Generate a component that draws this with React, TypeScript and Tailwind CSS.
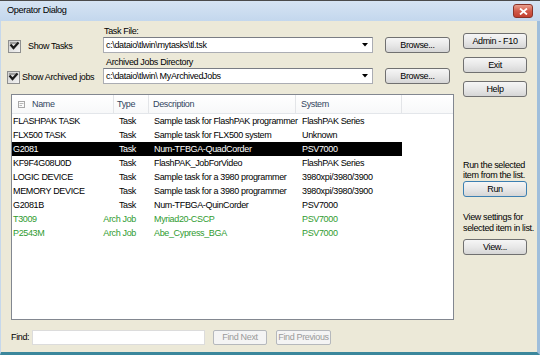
import React from 'react';

type Row = {
  name: string;
  type: string;
  desc: string;
  sys: string;
  selected?: boolean;
  arch?: boolean;
};

const rows: Row[] = [
  { name: 'FLASHPAK TASK', type: 'Task', desc: 'Sample task for FlashPAK programmer', sys: 'FlashPAK Series' },
  { name: 'FLX500 TASK', type: 'Task', desc: 'Sample task for FLX500 system', sys: 'Unknown' },
  { name: 'G2081', type: 'Task', desc: 'Num-TFBGA-QuadCorder', sys: 'PSV7000', selected: true },
  { name: 'KF9F4G08U0D', type: 'Task', desc: 'FlashPAK_JobForVideo', sys: 'FlashPAK Series' },
  { name: 'LOGIC DEVICE', type: 'Task', desc: 'Sample task for a 3980 programmer', sys: '3980xpi/3980/3900' },
  { name: 'MEMORY DEVICE', type: 'Task', desc: 'Sample task for a 3980 programmer', sys: '3980xpi/3980/3900' },
  { name: 'G2081B', type: 'Task', desc: 'Num-TFBGA-QuinCorder', sys: 'PSV7000' },
  { name: 'T3009', type: 'Arch Job', desc: 'Myriad20-CSCP', sys: 'PSV7000', arch: true },
  { name: 'P2543M', type: 'Arch Job', desc: 'Abe_Cypress_BGA', sys: 'PSV7000', arch: true },
];

function Button({ label, w = 'w-[64px]', def, disabled }: { label: string; w?: string; def?: boolean; disabled?: boolean }) {
  if (disabled) {
    return (
      <div className={`${w} h-[15px] flex items-center justify-center whitespace-nowrap rounded-[2px] border border-[#b5b8bc] bg-[#f4f4f4] text-[#9a9a9a]`}>
        {label}
      </div>
    );
  }
  return (
    <div
      className={`${w} h-[16px] flex items-center justify-center whitespace-nowrap rounded-[3px] border ${
        def ? 'border-[#3c7fb1]' : 'border-[#707070]'
      } bg-linear-to-b from-[#f6f6f6] via-[#e8e8e8] to-[#d6d6d6] text-black`}
    >
      {label}
    </div>
  );
}

function Check() {
  return (
    <div className="w-[13px] h-[13px] shrink-0 border border-[#8e8f8f] bg-linear-to-br from-[#cfcfcf] to-[#f4f4f4] flex items-center justify-center">
      <svg width="11" height="11" viewBox="0 0 11 11">
        <path d="M1.5 3.5 L4.5 7 L9.5 1.5" fill="none" stroke="#1a1a1a" strokeWidth="2.2" />
        <rect x="1" y="1" width="9" height="2" fill="#333" opacity="0.35" />
      </svg>
    </div>
  );
}

function Combo({ value }: { value: string }) {
  return (
    <div className="w-[270px] h-[16px] flex items-center bg-white border border-[#abadb3] border-t-[#7a7d84] pl-[2px] pr-[4px]">
      <span className="flex-1 whitespace-nowrap">{value}</span>
      <svg width="6" height="4" viewBox="0 0 6 4">
        <path d="M0 0 H6 L3 3.5 Z" fill="#000" />
      </svg>
    </div>
  );
}

export default function App() {
  return (
    <div className="w-[540px] h-[355px] flex flex-col overflow-hidden border-t border-[#4b4b4b] bg-[#c9dbef] font-['Liberation_Sans',Arial,sans-serif] text-[9px] tracking-[-0.35px] leading-none text-black">
      {/* title bar */}
      <div className="h-[20px] shrink-0 flex items-center pl-[7px] pr-[7px] bg-linear-to-b from-[#d6e4f3] to-[#c3d7ed]">
        <span className="text-[9.2px]">Operator Dialog</span>
        <div className="ml-auto w-[20px] h-[14px] rounded-[3px] border border-[#8a3328] bg-linear-to-b from-[#e9a08f] via-[#d15a49] to-[#c2402f] flex items-center justify-center">
          <svg width="9" height="7" viewBox="0 0 9 7">
            <path d="M1 0.5 L8 6.5 M8 0.5 L1 6.5" stroke="#fff" strokeWidth="1.8" />
          </svg>
        </div>
      </div>

      <div className="flex-1 flex bg-[#ece9d8] border-l border-l-[#c6d8ec] border-r-[3px] border-r-[#9fbedb] border-b-[3px] border-b-[#3b879c]">
        {/* left column */}
        <div className="w-[455px] flex flex-col pt-[4px]">
          <div className="h-[12px] ml-[103px] flex items-center">Task File:</div>
          <div className="h-[16px] flex">
            <div className="w-[102px] flex items-center self-end h-[13px] pl-[7px]">
              <Check />
              <span className="ml-[7px]">Show Tasks</span>
            </div>
            <Combo value={'c:\\dataio\\tlwin\\mytasks\\tl.tsk'} />
            <div className="ml-[12px]">
              <Button label="Browse..." w="w-[65px]" />
            </div>
          </div>

          <div className="h-[11px] mt-[4px] ml-[105px] flex items-center">Archived Jobs Directory</div>
          <div className="h-[16px] flex">
            <div className="w-[102px] flex items-center pl-[6px] pt-[2px]">
              <Check />
              <span className="ml-[2px] whitespace-nowrap">Show Archived jobs</span>
            </div>
            <Combo value={'c:\\dataio\\tlwin\\ MyArchivedJobs'} />
            <div className="ml-[12px]">
              <Button label="Browse..." w="w-[65px]" />
            </div>
          </div>

          {/* list */}
          <div className="mt-[10px] ml-[10px] w-[443px] h-[226px] border border-[#828790] bg-white flex flex-col">
            <div className="h-[19px] shrink-0 flex bg-linear-to-b from-white to-[#f7f8f9] border-b border-[#e3e6ea] text-[#33465f]">
              <div className="w-[102px] flex items-center border-r border-[#e3e5e8] pl-[6px]">
                <svg width="7" height="7" viewBox="0 0 7 7">
                  <rect x="0.5" y="0.5" width="6" height="6" fill="none" stroke="#a8a8a8" />
                  <path d="M1.5 2.5 H5.5 M1.5 4.5 H4" stroke="#b8b8b8" />
                </svg>
                <span className="ml-[7px]">Name</span>
              </div>
              <div className="w-[35px] flex items-center border-r border-[#e3e5e8] pl-[3px]">Type</div>
              <div className="w-[147px] flex items-center border-r border-[#e3e5e8] pl-[4px]">Description</div>
              <div className="w-[106px] flex items-center border-r border-[#e3e5e8] pl-[5px]">System</div>
              <div className="flex-1" />
            </div>
            {rows.map((r) => (
              <div
                key={r.name}
                className={`h-[14px] shrink-0 flex w-[390px] whitespace-nowrap ${
                  r.selected ? 'bg-black text-white' : r.arch ? 'text-[#2f9b2f]' : 'text-black'
                }`}
              >
                <div className="w-[102px] flex items-center pl-[1px]">{r.name}</div>
                <div className="w-[35px] flex items-center justify-end pr-[13px]">{r.type}</div>
                <div className="w-[147px] flex items-center pl-[5px]">{r.desc}</div>
                <div className="w-[106px] flex items-center pl-[6px]">{r.sys}</div>
              </div>
            ))}
          </div>

          {/* find row */}
          <div className="mt-[10px] h-[15px] flex items-center">
            <span className="ml-[10px] w-[21px]">Find:</span>
            <div className="w-[173px] h-[15px] bg-white border border-[#dcdcdc]" />
            <div className="ml-[8px]">
              <Button label="Find Next" w="w-[54px]" disabled />
            </div>
            <div className="ml-[9px]">
              <Button label="Find Previous" w="w-[55px]" disabled />
            </div>
          </div>
        </div>

        {/* right column */}
        <div className="flex-1 flex flex-col pl-[7px] pt-[12px]">
          <Button label="Admin - F10" />
          <div className="mt-[8px]">
            <Button label="Exit" />
          </div>
          <div className="mt-[8px]">
            <Button label="Help" />
          </div>
          <div className="mt-[63px] leading-[10px] whitespace-nowrap">
            <div>Run the selected</div>
            <div>item from the list.</div>
          </div>
          <div className="mt-[1px]">
            <Button label="Run" def />
          </div>
          <div className="mt-[15px] leading-[11px] whitespace-nowrap">
            <div>View settings for</div>
            <div>selected item in list.</div>
          </div>
          <div className="mt-[5px]">
            <Button label="View..." />
          </div>
        </div>
      </div>
    </div>
  );
}
